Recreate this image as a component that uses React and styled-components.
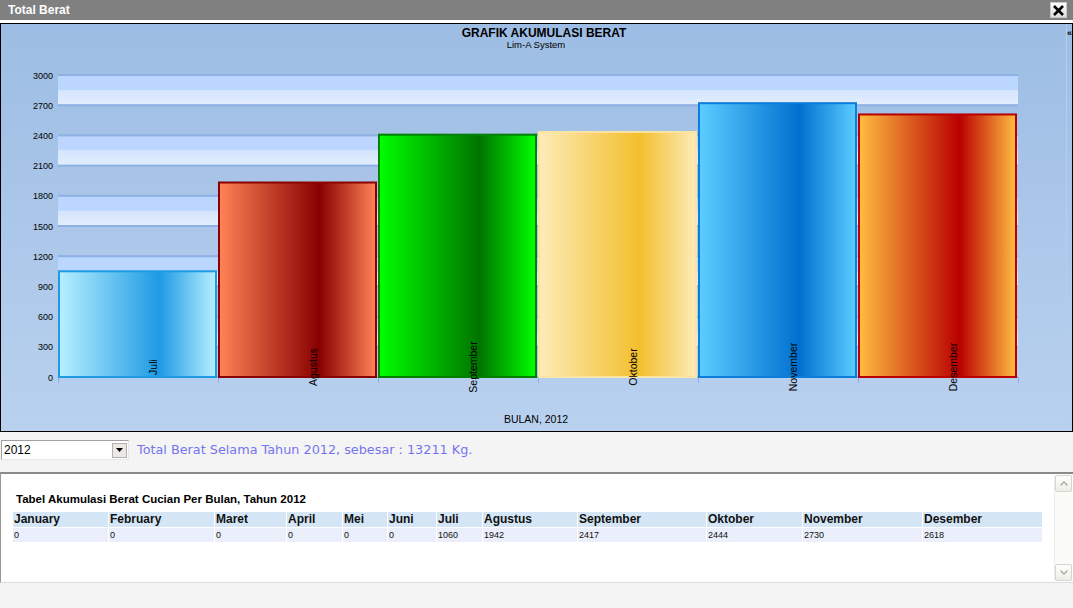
import styled, { createGlobalStyle } from 'styled-components';

const months = [
  { name: 'January', value: 0, width: 96 },
  { name: 'February', value: 0, width: 106 },
  { name: 'Maret', value: 0, width: 72 },
  { name: 'April', value: 0, width: 56 },
  { name: 'Mei', value: 0, width: 45 },
  { name: 'Juni', value: 0, width: 49 },
  { name: 'Juli', value: 1060, width: 46 },
  { name: 'Agustus', value: 1942, width: 95 },
  { name: 'September', value: 2417, width: 129 },
  { name: 'Oktober', value: 2444, width: 96 },
  { name: 'November', value: 2730, width: 120 },
  { name: 'Desember', value: 2618, width: 120 },
];

const bars = [
  { name: 'Juli', value: 1060, edge: '#b7f0ff', mid: '#1e9ae4', border: '#1e9be4' },
  { name: 'Agustus', value: 1942, edge: '#ff8357', mid: '#880000', border: '#8a0000' },
  { name: 'September', value: 2417, edge: '#00ff00', mid: '#007400', border: '#008000' },
  { name: 'Oktober', value: 2444, edge: '#fdebb8', mid: '#f3bf2c', border: '#fbe3a6' },
  { name: 'November', value: 2730, edge: '#5ccdff', mid: '#0070d0', border: '#0b7ddb' },
  { name: 'Desember', value: 2618, edge: '#ffbd42', mid: '#ba0000', border: '#bb0000' },
];

const PLOT_LEFT = 58;
const PLOT_RIGHT = 1018;
const BASE = 377;
const TOP = 75;
const yOf = (v) => BASE - (v / 3000) * (BASE - TOP);

const GlobalStyle = createGlobalStyle`
  body {
    margin: 0;
    background: #f4f4f4;
    font-family: "Liberation Sans", Arial, sans-serif;
  }
`;

const Window = styled.div`
  width: 1073px;
  height: 608px;
  display: flex;
  flex-direction: column;
  background: #f4f4f4;
  overflow: hidden;
`;

const TitleBar = styled.div`
  height: 20px;
  background: #808080;
  border-bottom: 3px solid #ffffff;
  display: flex;
  align-items: center;
  justify-content: space-between;
  padding: 0 6px 0 8px;
`;

const TitleText = styled.span`
  color: #ffffff;
  font-weight: bold;
  font-size: 12px;
`;

const CloseButton = styled.button`
  width: 17px;
  height: 16px;
  padding: 0;
  border: 1px solid #c8c8c8;
  background: linear-gradient(#ffffff, #dcdcdc);
  display: flex;
  align-items: center;
  justify-content: center;
`;

const ChartFrame = styled.div`
  height: 407px;
  border: 1px solid #000000;
  overflow: hidden;

  svg {
    display: block;
  }
`;

const ControlRow = styled.div`
  box-sizing: border-box;
  height: 40px;
  display: flex;
  align-items: flex-start;
  padding: 8px 0 0 1px;
  gap: 8px;
`;

const Dropdown = styled.div`
  width: 124px;
  height: 18px;
  background: #ffffff;
  border: 1px solid #a0a0a0;
  border-right-color: #e8e8e8;
  border-bottom-color: #e8e8e8;
  display: flex;
  align-items: center;
  justify-content: space-between;
  font-size: 12px;
  color: #000000;
  padding-left: 2px;
`;

const DropButton = styled.span`
  width: 15px;
  height: 15px;
  margin-right: 1px;
  background: #ece9e4;
  border: 1px solid #b0b0b0;
  box-sizing: border-box;
  display: flex;
  align-items: center;
  justify-content: center;
`;

const TotalText = styled.span`
  color: #7474ee;
  font-family: "DejaVu Sans", Verdana, sans-serif;
  font-size: 12.8px;
  line-height: 20px;
`;

const TablePanel = styled.div`
  height: 108px;
  background: #ffffff;
  border-top: 2px solid #8a8a8a;
  border-left: 1px solid #9a9a9a;
  border-bottom: 1px solid #dcdcdc;
  display: flex;
`;

const TableArea = styled.div`
  flex: 1;
  padding: 19px 0 0 12px;
`;

const TableTitle = styled.div`
  font-size: 11.5px;
  font-weight: bold;
  color: #000000;
  padding-left: 3px;
  height: 19px;
`;

const Row = styled.div`
  display: flex;
  background: ${(p) => (p.$head ? '#d4e6f5' : '#eaeffb')};
  border-bottom: 1px solid #ffffff;
  width: 1030px;
`;

const Cell = styled.div`
  box-sizing: border-box;
  border-right: 1px solid #ffffff;
  padding-left: 1px;
  font-size: ${(p) => (p.$head ? '12px' : '9px')};
  font-weight: ${(p) => (p.$head ? 'bold' : 'normal')};
  height: ${(p) => (p.$head ? '15px' : '14px')};
  line-height: ${(p) => (p.$head ? '15px' : '14px')};
  color: #111111;
  white-space: nowrap;
  overflow: hidden;
`;

const Scrollbar = styled.div`
  width: 17px;
  margin: 1px 1px 1px 0;
  background: #fbfbf8;
  border-left: 1px solid #ececec;
  display: flex;
  flex-direction: column;
  justify-content: space-between;
`;

const ScrollButton = styled.div`
  height: 15px;
  border: 1px solid #d6d6d0;
  border-radius: 2px;
  background: linear-gradient(#fdfdfb, #eeeee8);
  display: flex;
  align-items: center;
  justify-content: center;
`;

function Chart() {
  const ticks = Array.from({ length: 11 }, (_, i) => i * 300);
  const bands = [3000, 2400, 1800, 1200, 600];

  return (
    <svg width="1071" height="407" viewBox="1 24 1071 407">
      <defs>
        <linearGradient id="bg" x1="0" y1="0" x2="0" y2="1">
          <stop offset="0" stopColor="#9dbde4" />
          <stop offset="1" stopColor="#b9d1ef" />
        </linearGradient>
        <linearGradient id="band" x1="0" y1="0" x2="0" y2="1">
          <stop offset="0" stopColor="#bbd7ff" />
          <stop offset="0.48" stopColor="#bbd7ff" />
          <stop offset="0.5" stopColor="#d3e4fd" />
          <stop offset="1" stopColor="#e4effe" />
        </linearGradient>
        {bars.map((b) => (
          <linearGradient key={b.name} id={`bar-${b.name}`} x1="0" y1="0" x2="1" y2="0">
            <stop offset="0" stopColor={b.edge} />
            <stop offset="0.64" stopColor={b.mid} />
            <stop offset="1" stopColor={b.edge} />
          </linearGradient>
        ))}
      </defs>

      <rect x="1" y="24" width="1071" height="407" fill="url(#bg)" />
      <line x1="1066.5" y1="24" x2="1066.5" y2="431" stroke="#b6cdee" />
      <text x="1067" y="36" fontSize="9" fontWeight="bold" fill="#000">«</text>

      <text x="544" y="37" textAnchor="middle" fontSize="12" fontWeight="bold" fill="#000">
        GRAFIK AKUMULASI BERAT
      </text>
      <text x="536" y="48" textAnchor="middle" fontSize="9.5" fill="#000">
        Lim-A System
      </text>

      {bands.map((v) => (
        <rect
          key={v}
          x={PLOT_LEFT}
          y={yOf(v)}
          width={PLOT_RIGHT - PLOT_LEFT}
          height={yOf(v - 300) - yOf(v)}
          fill="url(#band)"
        />
      ))}

      {ticks.map((v) => (
        <g key={v}>
          <rect x={PLOT_LEFT} y={yOf(v) - 1} width={PLOT_RIGHT - PLOT_LEFT} height="2" fill="#8db0e5" />
          <text x="53" y={yOf(v) + 3.5} textAnchor="end" fontSize="9" fill="#000">
            {v}
          </text>
        </g>
      ))}

      {Array.from({ length: 7 }, (_, i) => (
        <line
          key={i}
          x1={PLOT_LEFT + 160 * i + 0.5}
          y1={BASE}
          x2={PLOT_LEFT + 160 * i + 0.5}
          y2={BASE + 6}
          stroke="#8db0e5"
        />
      ))}

      {bars.map((b, i) => {
        const x = PLOT_LEFT + 160 * i;
        const y = yOf(b.value);
        return (
          <g key={b.name}>
            <rect
              x={x + 1}
              y={y + 1}
              width="157"
              height={BASE - y - 1}
              fill={`url(#bar-${b.name})`}
              stroke={b.border}
              strokeWidth="2"
            />
            <text
              transform={`translate(${x + 99} 367) rotate(-90)`}
              textAnchor="middle"
              fontSize="10.5"
              fill="#000"
            >
              {b.name}
            </text>
          </g>
        );
      })}

      <text x="536" y="423" textAnchor="middle" fontSize="10.5" fill="#000">
        BULAN, 2012
      </text>
    </svg>
  );
}

export default function App() {
  return (
    <>
      <GlobalStyle />
      <Window>
        <TitleBar>
          <TitleText>Total Berat</TitleText>
          <CloseButton aria-label="close">
            <svg width="13" height="13" viewBox="0 0 13 13">
              <path d="M2 2 L11 11 M11 2 L2 11" stroke="#000" strokeWidth="2.6" />
            </svg>
          </CloseButton>
        </TitleBar>

        <ChartFrame>
          <Chart />
        </ChartFrame>

        <ControlRow>
          <Dropdown>
            <span>2012</span>
            <DropButton>
              <svg width="7" height="4" viewBox="0 0 7 4">
                <path d="M0 0 H7 L3.5 4 Z" fill="#000" />
              </svg>
            </DropButton>
          </Dropdown>
          <TotalText>Total Berat Selama Tahun 2012, sebesar : 13211 Kg.</TotalText>
        </ControlRow>

        <TablePanel>
          <TableArea>
            <TableTitle>Tabel Akumulasi Berat Cucian Per Bulan, Tahun 2012</TableTitle>
            <Row $head>
              {months.map((m) => (
                <Cell key={m.name} $head style={{ width: m.width }}>
                  {m.name}
                </Cell>
              ))}
            </Row>
            <Row>
              {months.map((m) => (
                <Cell key={m.name} style={{ width: m.width }}>
                  {m.value}
                </Cell>
              ))}
            </Row>
          </TableArea>
          <Scrollbar>
            <ScrollButton>
              <svg width="8" height="5" viewBox="0 0 8 5">
                <path d="M0.5 4.5 L4 1 L7.5 4.5" fill="none" stroke="#a8a8a0" strokeWidth="1.3" />
              </svg>
            </ScrollButton>
            <ScrollButton>
              <svg width="8" height="5" viewBox="0 0 8 5">
                <path d="M0.5 0.5 L4 4 L7.5 0.5" fill="none" stroke="#a8a8a0" strokeWidth="1.3" />
              </svg>
            </ScrollButton>
          </Scrollbar>
        </TablePanel>
      </Window>
    </>
  );
}
